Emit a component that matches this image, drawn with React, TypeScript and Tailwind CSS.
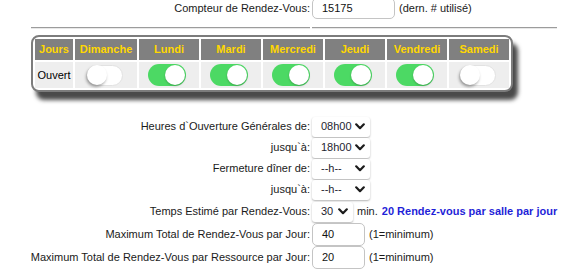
import React from 'react';

const days = [
  { name: 'Dimanche', on: false, w: 'w-[62px]' },
  { name: 'Lundi', on: true, w: 'w-[60px]' },
  { name: 'Mardi', on: true, w: 'w-[60px]' },
  { name: 'Mercredi', on: true, w: 'w-[60px]' },
  { name: 'Jeudi', on: true, w: 'w-[60px]' },
  { name: 'Vendredi', on: true, w: 'w-[60px]' },
  { name: 'Samedi', on: false, w: 'w-[60px]' },
];

function Chevron() {
  return (
    <svg width="10" height="7" viewBox="0 0 10 7" className="shrink-0">
      <path d="M1.2 1.3 L5 5.2 L8.8 1.3" fill="none" stroke="#1c1c1c" strokeWidth="2.2" strokeLinecap="round" strokeLinejoin="round" />
    </svg>
  );
}

function Select({ value, wide = true }: { value: string; wide?: boolean }) {
  return (
    <div
      className={`flex items-center justify-between h-[20px] bg-white rounded-[3px] shadow-[0_1px_2px_rgba(0,0,0,0.3)] pl-[9px] pr-[5px] text-[#1e1e30] ${wide ? 'w-[58px]' : 'w-[41px]'}`}
    >
      <span>{value}</span>
      <Chevron />
    </div>
  );
}

function TextInput({ value, className }: { value: string; className: string }) {
  return (
    <div className={`flex items-center bg-white border-[1.5px] border-[#c4c4c4] rounded-[5px] pl-[9px] text-[#111] ${className}`}>
      {value}
    </div>
  );
}

function Toggle({ on }: { on: boolean }) {
  if (on) {
    return (
      <div className="w-[38px] h-[22px] rounded-full bg-[#4cd964] flex items-center justify-end pr-[1px]">
        <div className="w-[20px] h-[20px] rounded-full bg-white shadow-[0_1px_2px_rgba(0,0,0,0.25)]"></div>
      </div>
    );
  }
  return (
    <div className="w-[37px] h-[21px] rounded-full bg-white border border-[#e2e2e2] flex items-center">
      <div className="w-[20px] h-[20px] rounded-full bg-white shadow-[-1px_2px_3px_rgba(0,0,0,0.35)]"></div>
    </div>
  );
}

function Row({ label, h, children }: { label: string; h: string; children: React.ReactNode }) {
  return (
    <div className={`flex items-center ${h}`}>
      <div className="w-[279px] shrink-0 flex justify-end whitespace-nowrap text-[#1a1a1a]">
        <span>{label}</span>
      </div>
      <div className="ml-[2px] flex items-center gap-[4px] whitespace-nowrap">{children}</div>
    </div>
  );
}

export default function App() {
  return (
    <div className="w-[566px] h-[270px] overflow-hidden bg-white font-['Liberation_Sans',Arial,sans-serif] text-[11px] leading-none pl-[31px]">
      {/* Counter */}
      <div className="-mt-[2px]">
        <Row label="Compteur de Rendez-Vous:" h="h-[21px]">
          <TextInput value="15175" className="w-[83px] h-[21px]" />
          <span className="text-[#1a1a1a]">(dern. # utilisé)</span>
        </Row>
      </div>

      {/* Separator */}
      <div className="flex mt-[8px]">
        <div className="w-[279px] border-t border-t-[#9c9c9c] border-b border-b-[#e8e8e8]"></div>
        <div className="ml-[2px] w-[245px] border-t border-t-[#9c9c9c] border-b border-b-[#e8e8e8]"></div>
      </div>

      {/* Days table */}
      <div className="mt-[6px] w-[482px] border-2 border-[#7c7c7c] rounded-[8px] bg-white shadow-[5px_8px_4px_#4a4a4a]">
        <table className="border-separate border-spacing-[2px]">
          <thead>
            <tr className="h-[21px]">
              <th className="w-[38px] bg-[#808080] text-[#ffd700] font-bold p-0">Jours</th>
              {days.map((d) => (
                <th key={d.name} className={`${d.w} bg-[#808080] text-[#ffd700] font-bold p-0`}>
                  {d.name}
                </th>
              ))}
            </tr>
          </thead>
          <tbody>
            <tr className="h-[26px]">
              <td className="bg-[#eeeeee] text-center text-black p-0">Ouvert</td>
              {days.map((d) => (
                <td key={d.name} className="bg-[#eeeeee] p-0">
                  <div className="flex justify-center pr-[4px]">
                    <Toggle on={d.on} />
                  </div>
                </td>
              ))}
            </tr>
          </tbody>
        </table>
      </div>

      {/* Hours */}
      <div className="mt-[24px]">
        <Row label="Heures d`Ouverture Générales de:" h="h-[21px]">
          <Select value="08h00" />
        </Row>
        <Row label="jusqu`à:" h="h-[21px]">
          <Select value="18h00" />
        </Row>
        <Row label="Fermeture dîner de:" h="h-[21px]">
          <Select value="--h--" />
        </Row>
        <Row label="jusqu`à:" h="h-[21px]">
          <Select value="--h--" />
        </Row>
        <Row label="Temps Estimé par Rendez-Vous:" h="h-[23px]">
          <Select value="30" wide={false} />
          <span className="text-[#1a1a1a]">min.</span>
          <span className="text-[#1f1fd8] font-bold">20 Rendez-vous par salle par jour</span>
        </Row>
        <Row label="Maximum Total de Rendez-Vous par Jour:" h="h-[23px]">
          <TextInput value="40" className="w-[53px] h-[23px]" />
          <span className="text-[#1a1a1a]">(1=minimum)</span>
        </Row>
        <Row label="Maximum Total de Rendez-Vous par Ressource par Jour:" h="h-[23px]">
          <TextInput value="20" className="w-[53px] h-[23px]" />
          <span className="text-[#1a1a1a]">(1=minimum)</span>
        </Row>
      </div>
    </div>
  );
}
